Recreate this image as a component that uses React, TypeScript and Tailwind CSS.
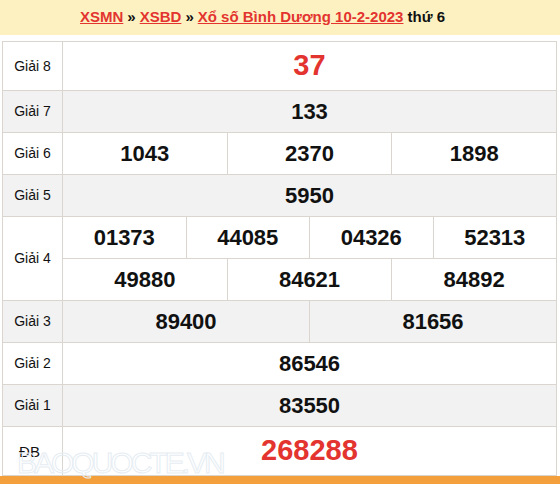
import React from 'react';

type Prize = {
  label: string;
  rows: string[][];
  shaded?: boolean;
  special?: boolean;
  tall?: boolean;
};

const prizes: Prize[] = [
  { label: 'Giải 8', rows: [['37']], special: true, tall: true },
  { label: 'Giải 7', rows: [['133']], shaded: true },
  { label: 'Giải 6', rows: [['1043', '2370', '1898']] },
  { label: 'Giải 5', rows: [['5950']], shaded: true },
  {
    label: 'Giải 4',
    rows: [
      ['01373', '44085', '04326', '52313'],
      ['49880', '84621', '84892'],
    ],
  },
  { label: 'Giải 3', rows: [['89400', '81656']], shaded: true },
  { label: 'Giải 2', rows: [['86546']] },
  { label: 'Giải 1', rows: [['83550']], shaded: true },
  { label: 'ĐB', rows: [['268288']], special: true, tall: true },
];

const PrizeRow: React.FC<{ prize: Prize; last: boolean }> = ({ prize, last }) => {
  const bg = prize.shaded ? 'bg-[#f2f2f2]' : 'bg-white';
  return (
    <div className={`flex ${bg} ${last ? '' : 'border-b border-[#dad6cf]'}`}>
      <div
        className={`w-[60px] shrink-0 border-r border-[#dad6cf] flex items-center justify-center text-[#111] ${
          prize.label === 'ĐB' ? 'text-[15px] pr-[6px] pt-[2px]' : 'text-[14px]'
        }`}
      >
        {prize.label}
      </div>
      <div className="flex-1 flex flex-col">
        {prize.rows.map((row, ri) => (
          <div
            key={ri}
            className={`flex ${prize.tall ? 'h-[48px]' : 'h-[41px]'} ${
              ri < prize.rows.length - 1 ? 'border-b border-[#dad6cf] h-[42px]' : ''
            }`}
          >
            {row.map((num, ci) => (
              <div
                key={ci}
                className={`flex-1 basis-0 flex items-center justify-center font-bold ${
                  prize.special ? 'text-[29px] text-[#e3342f]' : 'text-[22px] text-[#111]'
                } ${ci < row.length - 1 ? 'border-r border-[#dad6cf]' : ''}`}
              >
                {num}
              </div>
            ))}
          </div>
        ))}
      </div>
    </div>
  );
};

export default function App() {
  return (
    <div className="w-[560px] h-[484px] overflow-hidden bg-white font-['Liberation_Sans',Arial,sans-serif] relative">
      <div className="h-[35px] bg-[#fdf1c2] flex items-center justify-center pr-[35px] text-[15px] font-bold text-[#111]">
        <a href="#" className="text-[#e3342f] underline">XSMN</a>
        <span className="mx-[4px]">»</span>
        <a href="#" className="text-[#e3342f] underline">XSBD</a>
        <span className="mx-[4px]">»</span>
        <a href="#" className="text-[#e3342f] underline">Xổ số Bình Dương 10-2-2023</a>
        <span className="ml-[4px]">thứ 6</span>
      </div>

      <div className="mt-[6px] ml-[2px] w-[555px] border border-[#dad6cf]">
        {prizes.map((p, i) => (
          <PrizeRow key={p.label} prize={p} last={i === prizes.length - 1} />
        ))}
      </div>

      <div className="h-[10px] bg-[#f3a03c]" />

      <div className="absolute left-[17px] top-[440px] text-[30px] tracking-[-3px] text-transparent [-webkit-text-stroke:1px_#e6edf3] pointer-events-none select-none">
        BAOQUOCTE.VN
      </div>
    </div>
  );
}
